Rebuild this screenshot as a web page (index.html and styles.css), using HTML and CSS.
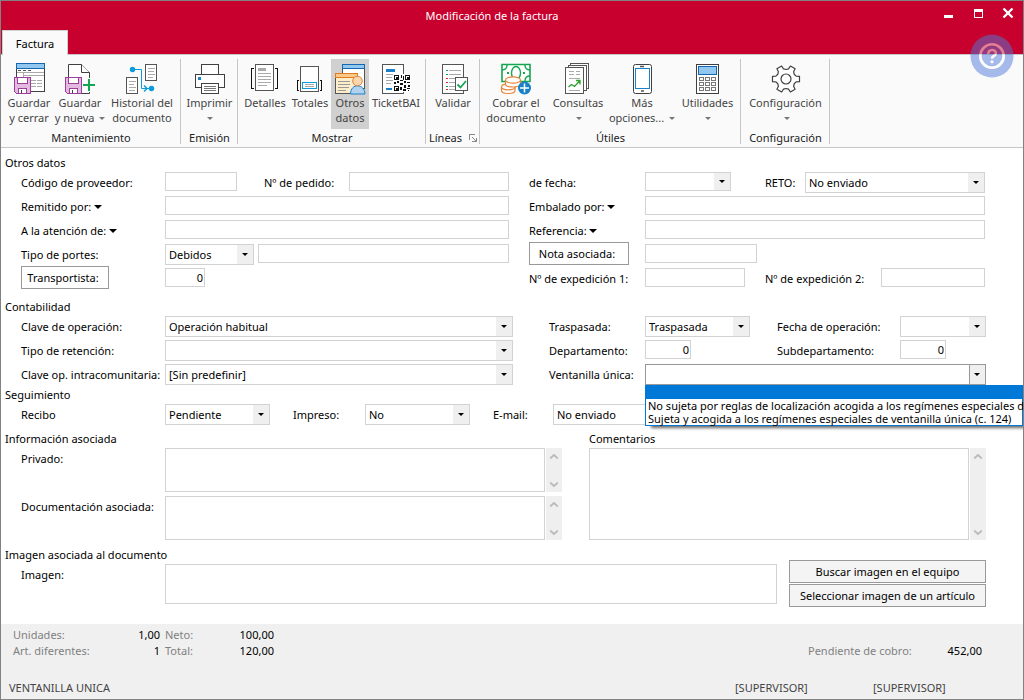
FILE: index.html
```html
<!DOCTYPE html>
<html lang="es">
<head>
<meta charset="utf-8">
<title>Modificación de la factura</title>
<link rel="stylesheet" href="styles.css">
</head>
<body>
<div class="window">
  <header class="titlebar">
    <div class="title-row">
      <h1 class="title">Modificación de la factura</h1>
      <div class="window-buttons">
        <button type="button" aria-label="Minimizar"><svg width="12" height="12" viewBox="0 0 12 12"><path d="M1.500 8h9v3h-9z" fill="#fff" shape-rendering="crispEdges"/></svg></button>
        <button type="button" aria-label="Maximizar"><svg width="12" height="12" viewBox="0 0 12 12" shape-rendering="crispEdges"><path d="M2 2h9v3H2zM2 2h1v9H2zM10 2h1v9h-1zM2 10h9v1H2z" fill="#fff"/></svg></button>
        <button type="button" aria-label="Cerrar"><svg width="12" height="12" viewBox="0 0 12 12"><path d="M1.500 1.500l9 9M10.500 1.500l-9 9" stroke="#fff" stroke-width="2.400"/></svg></button>
      </div>
    </div>
    <nav class="tabs"><button type="button" class="tab">Factura</button></nav>
    <button type="button" class="help" aria-label="Ayuda">
      <svg width="44" height="44" viewBox="0 0 44 44">
        <mask id="help-cut"><rect width="44" height="44" fill="#fff"/><circle cx="22" cy="22" r="11.700" fill="none" stroke="#000" stroke-width="2.600"/><path d="M18.300 20c0-5.300 7.600-5 7.600-.8 0 2.800-3.900 2.600-3.900 5.300" fill="none" stroke="#000" stroke-width="2.600"/><circle cx="22" cy="27.800" r="1.500" fill="#000"/></mask>
        <circle cx="22" cy="22" r="21.500" fill="#5078da" fill-opacity=".5" mask="url(#help-cut)"/>
        <g fill="none" stroke="#fff" stroke-opacity=".5" stroke-width="2.600"><circle cx="22" cy="22" r="11.700"/><path d="M18.300 20c0-5.300 7.600-5 7.600-.8 0 2.800-3.900 2.600-3.900 5.300"/></g>
        <circle cx="22" cy="27.800" r="1.500" fill="#fff" fill-opacity=".5"/>
      </svg>
    </button>
  </header>

  <div class="ribbon">
    <section class="group">
      <div class="tools">
        <button type="button" class="tool w50">
          <svg class="icon" viewBox="0 0 32 32" shape-rendering="crispEdges"><path d="M3.500 .5h28v28h-28z" fill="#fff" stroke="#404040"/><path d="M3.500 .5h28v5h-28z" fill="#92c8f0" stroke="#1467b0"/><path d="M5 7.500h3M10 7.500h3M15 7.500h3" stroke="#555"/><path d="M4 9.500h27M10.500 10v5M10 12.500h21" stroke="#aaa"/><path d="M18 17.500h11M18 20.500h11M18 23.500h11" stroke="#aaa" stroke-dasharray="5 1"/><path d="M1.500 14.500h16v16h-14l-2-2z" fill="#e3b9e0" stroke="#9b3f9b"/><path d="M4.500 14.500h10v6h-10zM5.500 25.500h8v5h-8z" fill="#fff" stroke="#9b3f9b"/><path d="M8 27v3" stroke="#404040"/></svg>
          <span>Guardar<br>y cerrar</span></button>
        <button type="button" class="tool w52">
          <svg class="icon" viewBox="0 0 32 32"><path d="M4.500 1.500h13l8 8v21h-21z" fill="#fff" stroke="#404040"/><path d="M17.500 1.500v8h8" fill="#fff" stroke="#404040"/><g shape-rendering="crispEdges"><path d="M1.500 14.500h16v16h-14l-2-2z" fill="#e3b9e0" stroke="#9b3f9b"/><path d="M4.500 14.500h10v6h-10zM5.500 25.500h8v5h-8z" fill="#fff" stroke="#9b3f9b"/><path d="M8 27v3" stroke="#404040"/><path d="M18 22h13M25 15v14" stroke="#fafafa" stroke-width="5"/><path d="M19 22h12M25 16v12" stroke="#14a651" stroke-width="2"/></g></svg>
          <span>Guardar<br>y nueva <i class="caret"></i></span></button>
        <button type="button" class="tool w72">
          <svg class="icon" viewBox="0 0 32 32"><g fill="#fff" stroke="#555" shape-rendering="crispEdges"><path d="M19.500 1.500h11v16h-11zM.5 14.500h11v16H.5z"/></g><path d="M21.500 5.500h7M21.500 8.500h6M21.500 11.500h7M21.500 14.500h5M2.500 18.500h7M2.500 21.500h5M2.500 24.500h7M2.500 27.500h6" stroke="#aaa" shape-rendering="crispEdges"/><path d="M6 6.500h9.500v19h10" fill="none" stroke="#0c9bdc"/><circle cx="6.500" cy="6.500" r="2.700" fill="#0c9bdc"/><circle cx="25.500" cy="25.500" r="2.700" fill="#0c9bdc"/><path d="M18 22.500l3 3-3 3" fill="none" stroke="#0c9bdc" stroke-width="1.500"/></svg>
          <span>Historial del<br>documento</span></button>
      </div>
      <h2 class="group-name">Mantenimiento</h2>
    </section>
    <section class="group">
      <div class="tools">
        <button type="button" class="tool w51">
          <svg class="icon" viewBox="0 0 32 32" shape-rendering="crispEdges"><g fill="#fff" stroke="#404040"><path d="M7.500 1.500h17v10h-17z"/><path d="M1.500 11.500h29v13h-29z"/><path d="M7.500 20.500h17v10h-17z"/></g><path d="M4 14h3v3H4z" fill="#1a80c9"/><path d="M10 23.500h12M10 25.500h12M10 27.500h12" stroke="#777"/></svg>
          <span>Imprimir<br><i class="caret"></i></span></button>
      </div>
      <h2 class="group-name">Emisión</h2>
    </section>
    <section class="group">
      <div class="tools">
        <button type="button" class="tool w48">
          <svg class="icon" viewBox="0 0 32 32" shape-rendering="crispEdges"><path d="M6.500 1.500h18v26h-18z" fill="#fff" stroke="#555"/><path d="M9 5h8v3H9z" fill="#aaa"/><path d="M9 10.500h13M9 13.500h13M9 16.500h13M9 19.500h13M9 22.500h9" stroke="#aaa"/><path d="M5 5.500H2.500v20H5M26 5.500h2.500v20H26" fill="none" stroke="#111"/></svg>
          <span>Detalles</span></button>
        <button type="button" class="tool w42">
          <svg class="icon" viewBox="0 0 32 32" shape-rendering="crispEdges"><path d="M6.500 3.500h18v25h-18z" fill="#fff" stroke="#555"/><path d="M8.500 19.500h14v6h-14z" fill="#fff" stroke="#0c9bdc"/><path d="M11 21.500h9M11 23.500h9" stroke="#aaa"/><path d="M5 17.500H3.500v10H5M26 17.500h1.500v10H26" fill="none" stroke="#111"/></svg>
          <span>Totales</span></button>
        <button type="button" class="tool w38 active" aria-pressed="true">
          <svg class="icon" viewBox="0 0 32 32"><g shape-rendering="crispEdges"><path d="M8.500 1.500h22v24h-22z" fill="#fff" stroke="#555"/><path d="M8.500 1.500h22v4h-22z" fill="#92c8f0" stroke="#1467b0"/><path d="M1.500 10.500h22v20h-22z" fill="#fdeec9" stroke="#555"/><path d="M1.500 10.500h22v4h-22z" fill="#fbc987" stroke="#e07a20"/><path d="M4 18.500h12M4 21.500h12M4 24.500h11M4 27.500h8" stroke="#999"/></g><path d="M16.500 31c0-11 14-11 14.500 0z" fill="#b0d2ee" stroke="#1a80c9"/><circle cx="23.500" cy="18" r="4.800" fill="#fbd5ac" stroke="#d8863e"/></svg>
          <span>Otros<br>datos</span></button>
        <button type="button" class="tool w54">
          <svg class="icon" viewBox="0 0 32 32" shape-rendering="crispEdges"><path d="M2.500 1.500h21v29h-21z" fill="#fff" stroke="#555"/><path d="M6 6h9v3H6zM6 25h6v2H6z" fill="#1a80c9"/><path d="M6 11.500h7M6 14.500h6M6 17.500h7M6 20.500h5" stroke="#aaa"/><path d="M13 11h18v18H13z" fill="#fff"/><path d="M14.500 12.500h4v4h-4zM25.500 12.500h4v4h-4zM14.500 23.500h4v4h-4z" fill="none" stroke="#111"/><path d="M16 14h2v2h-2zM27 14h2v2h-2zM16 25h2v2h-2zM21 12h1v3h-1zM23 13h1v4h-1zM20 17h3v1h-3zM14 19h2v2h-2zM17 18h2v2h-2zM20 20h3v2h-3zM24 18h2v2h-2zM27 19h3v1h-3zM24 22h2v3h-2zM28 22h2v2h-2zM20 24h2v3h-2zM23 26h3v2h-3zM27 25h3v1h-3zM28 27h1v1h-1z" fill="#111"/></svg>
          <span>TicketBAI</span></button>
      </div>
      <h2 class="group-name">Mostrar</h2>
    </section>
    <section class="group">
      <div class="tools">
        <button type="button" class="tool w48">
          <svg class="icon" viewBox="0 0 32 32"><g shape-rendering="crispEdges"><path d="M5.500 1.500h21v29h-21z" fill="#fff" stroke="#555"/><path d="M12 7.500h12M12 11.500h12M12 15.500h8M12 19.500h7M12 23.500h6M12 26.500h6" stroke="#aaa"/><path d="M9 7.500h2M9 11.500h2M9 23.500h2" stroke="#14a651"/><path d="M9 15.500h2M9 19.500h2M9 26.500h2" stroke="#d22"/><path d="M18.500 14.500h12v13h-12z" fill="#fff" stroke="#555"/></g><path d="M20.500 21.500l3 3 5.500-6.500" fill="none" stroke="#14a651" stroke-width="1.800"/></svg>
          <span>Validar</span></button>
      </div>
      <h2 class="group-name spread">Líneas <svg width="9" height="9" viewBox="0 0 9 9" fill="none" stroke="#888" shape-rendering="crispEdges"><path d="M1.500 7V1.500H7M4 4l4 4M8 5v3.500H4"/></svg></h2>
    </section>
    <section class="group">
      <div class="tools">
        <button type="button" class="tool w66">
          <svg class="icon" viewBox="0 0 32 32"><path d="M2 1.500h28v17H2z" fill="#fff" stroke="#14a651" stroke-width="1.600"/><path d="M2 7c4 0 5-2 5-5M30 7c-4 0-5-2-5-5M30 13c-4 0-5 2-5 5" fill="none" stroke="#14a651" stroke-width="1.400"/><ellipse cx="16" cy="10" rx="4.500" ry="6.500" fill="#fff" stroke="#14a651" stroke-width="1.400"/><path d="M7 9h2v2H7zM23 9h2v2h-2z" fill="#14a651"/><g fill="#fff" stroke="#e8853a" stroke-width="1.200"><path d="M1.500 24v3.500c0 4 13.500 4 13.500 0V24"/><ellipse cx="8.200" cy="24" rx="6.700" ry="2.800"/><path d="M5.500 17v4c0 4 15 4 15 0v-4"/><ellipse cx="13" cy="17" rx="7.500" ry="3.200"/></g><circle cx="24.500" cy="25" r="6.500" fill="#1a80c9"/><path d="M20 25h9M24.500 20.500v9" stroke="#fff" stroke-width="1.500"/></svg>
          <span>Cobrar el<br>documento</span></button>
        <button type="button" class="tool w58">
          <svg class="icon" viewBox="0 0 32 32"><g shape-rendering="crispEdges" fill="#fff" stroke="#555"><path d="M8.500 .5h18v25h-18z"/><path d="M6.500 2.500h18v25h-18z"/><path d="M3.500 4.500h18v26h-18z"/><path d="M7 8.500h5M14 8.500h4M7 11.500h5M14 11.500h4M7 15.500h11M7 27.500h11" stroke="#aaa"/></g><path d="M6.500 24l3-2.500 3 2 5.500-6M14 17.500h4v4" fill="none" stroke="#2ba02b" stroke-width="1.300"/></svg>
          <span>Consultas<br><i class="caret"></i></span></button>
        <button type="button" class="tool w70">
          <svg class="icon" viewBox="0 0 32 32"><rect x="7.500" y="1.500" width="18" height="29" rx="2" fill="#fff" stroke="#404040"/><path d="M9.500 5.500h14v20h-14z" fill="#fff" stroke="#1a80c9" shape-rendering="crispEdges"/><path d="M14 3.500h4M15 28h3" stroke="#555" stroke-width="1.300"/></svg>
          <span>Más<br>opciones... <i class="caret"></i></span></button>
        <button type="button" class="tool w61">
          <svg class="icon" viewBox="0 0 32 32" shape-rendering="crispEdges"><path d="M4.500 1.500h22v29h-22z" fill="#fff" stroke="#404040"/><path d="M6.500 3.500h18v8h-18z" fill="#92c8f0" stroke="#1467b0"/><path d="M7.500 14.500h4v3h-4zM13.500 14.500h4v3h-4zM19.500 14.500h4v3h-4zM7.500 19.500h4v3h-4zM13.500 19.500h4v3h-4zM19.500 19.500h4v3h-4zM7.500 24.500h4v3h-4zM13.500 24.500h4v3h-4zM19.500 24.500h4v3h-4z" fill="#fff" stroke="#777"/></svg>
          <span>Utilidades<br><i class="caret"></i></span></button>
      </div>
      <h2 class="group-name">Útiles</h2>
    </section>
    <section class="group">
      <div class="tools">
        <button type="button" class="tool w83">
          <svg class="icon" viewBox="0 0 32 32" fill="#fff" stroke="#404040" stroke-width="1.200"><path stroke-linejoin="round" d="M26.100 13.100L29.500 13.300V18.700L26.100 18.900L24.200 20.750L23.600 23.300L25.100 26.300L20.400 29L18.500 26.200L16 25.500L13.500 26.200L11.600 29L6.900 26.300L8.400 23.300L7.800 20.750L5.900 18.900L2.500 18.700V13.300L5.900 13.100L7.800 11.250L8.400 8.700L6.900 5.700L11.600 3L13.500 5.800L16 6.500L18.500 5.800L20.400 3L25.100 5.700L23.600 8.700L24.200 11.250z"/><circle cx="16" cy="16" r="5"/></svg>
          <span>Configuración<br><i class="caret"></i></span></button>
      </div>
      <h2 class="group-name">Configuración</h2>
    </section>
  </div>

  <main class="form">
    <section class="section">
      <h2>Otros datos</h2>
      <div class="grid general">
        <label for="codigo">Código de proveedor:</label>
        <div class="row"><input id="codigo" class="w72"><label for="pedido" class="lead mid">Nº de pedido:</label><input id="pedido" class="grow"></div>
        <label for="fecha" class="col2">de fecha:</label>
        <div class="row"><select id="fecha" class="w86 date-box"><option></option></select><label for="reto" class="lead reto">RETO:</label><select id="reto" class="grow"><option>No enviado</option></select></div>

        <label for="remitido">Remitido por: <i class="caret dark"></i></label>
        <input id="remitido">
        <label for="embalado" class="col2">Embalado por: <i class="caret dark"></i></label>
        <input id="embalado">

        <label for="atencion">A la atención de: <i class="caret dark"></i></label>
        <input id="atencion">
        <label for="referencia" class="col2">Referencia: <i class="caret dark"></i></label>
        <input id="referencia">

        <label for="portes">Tipo de portes:</label>
        <div class="row gap4"><select id="portes" class="w89"><option>Debidos</option></select><input class="grow" aria-label="Detalle de portes"></div>
        <button type="button" class="btn plain w100 col2">Nota asociada:</button>
        <div class="row"><input class="w112" aria-label="Nota asociada"></div>

        <button type="button" class="btn plain w88">Transportista:</button>
        <div class="row"><input class="w40 num" value="0" aria-label="Transportista"></div>
        <label for="exp1" class="col2">Nº de expedición 1:</label>
        <div class="row"><input id="exp1" class="w100"><label for="exp2" class="lead grow exp">Nº de expedición 2:</label><input id="exp2" class="w104"></div>
      </div>
    </section>

    <section class="section gap-l">
      <h2>Contabilidad</h2>
      <div class="grid accounting">
        <label for="clave">Clave de operación:</label>
        <select id="clave"><option>Operación habitual</option></select>
        <label for="traspasada" class="col2">Traspasada:</label>
        <div class="row"><select id="traspasada" class="w105"><option>Traspasada</option></select><label for="fop" class="grow lead date">Fecha de operación:</label><select id="fop" class="w86"><option></option></select></div>

        <label for="retencion">Tipo de retención:</label>
        <select id="retencion"><option></option></select>
        <label for="depto" class="col2">Departamento:</label>
        <div class="row"><div class="w105 row"><input id="depto" class="w46 num" value="0"></div><label for="subdepto" class="grow lead date">Subdepartamento:</label><div class="w86 row"><input id="subdepto" class="w46 num" value="0"></div></div>

        <label for="intra">Clave op. intracomunitaria:</label>
        <select id="intra"><option>[Sin predefinir]</option></select>
        <label for="ventanilla" class="col2">Ventanilla única:</label>
        <div class="open-combo">
          <select id="ventanilla"><option></option></select>
          <ul class="list" role="listbox" aria-label="Ventanilla única">
            <li role="option" class="selected" aria-selected="true"></li>
            <li role="option">No sujeta por reglas de localización acogida a los regímenes especiales d</li>
            <li role="option">Sujeta y acogida a los regímenes especiales de ventanilla única (c. 124)</li>
          </ul>
        </div>
      </div>
    </section>

    <section class="section gap-s">
      <h2>Seguimiento</h2>
      <div class="row tracking">
        <label for="recibo" class="w144">Recibo</label><select id="recibo" class="w105"><option>Pendiente</option></select>
        <label for="impreso" class="lead w95">Impreso:</label><select id="impreso" class="w105"><option>No</option></select>
        <label for="email" class="lead w83">E-mail:</label><select id="email" class="w200"><option>No enviado</option></select>
      </div>
    </section>

    <div class="info">
      <section class="section">
        <h2>Información asociada</h2>
        <div class="memo-row"><label for="privado">Privado:</label><div class="memo"><textarea id="privado"></textarea><span class="scroll"><svg viewBox="0 0 8 5"><path d="M0 4.500l4-3.500 4 3.500"/></svg><svg viewBox="0 0 8 5"><path d="M0 .5l4 3.500 4-3.500"/></svg></span></div></div>
        <div class="memo-row"><label for="docu">Documentación asociada:</label><div class="memo"><textarea id="docu"></textarea><span class="scroll"><svg viewBox="0 0 8 5"><path d="M0 4.500l4-3.500 4 3.500"/></svg><svg viewBox="0 0 8 5"><path d="M0 .5l4 3.500 4-3.500"/></svg></span></div></div>
      </section>
      <section class="section comments">
        <h2><label for="coment">Comentarios</label></h2>
        <div class="memo"><textarea id="coment"></textarea><span class="scroll"><svg viewBox="0 0 8 5"><path d="M0 4.500l4-3.500 4 3.500"/></svg><svg viewBox="0 0 8 5"><path d="M0 .5l4 3.500 4-3.500"/></svg></span></div>
      </section>
    </div>

    <div class="image-block">
      <section class="section">
        <h2>Imagen asociada al documento</h2>
        <div class="memo-row short"><label for="imagen">Imagen:</label><textarea id="imagen"></textarea></div>
      </section>
      <div class="image-buttons">
        <button type="button" class="btn">Buscar imagen en el equipo</button>
        <button type="button" class="btn">Seleccionar imagen de un artículo</button>
      </div>
    </div>
  </main>

  <footer class="footer">
    <div class="totals">
      <dl><dt>Unidades:</dt><dd>1,00</dd><dt>Art. diferentes:</dt><dd>1</dd></dl>
      <dl class="amounts"><dt>Neto:</dt><dd>100,00</dd><dt>Total:</dt><dd>120,00</dd></dl>
      <dl class="pending"><dt>Pendiente de cobro:</dt><dd>452,00</dd></dl>
    </div>
    <div class="status"><span class="grow">VENTANILLA UNICA</span><span class="user">[SUPERVISOR]</span><span class="user">[SUPERVISOR]</span></div>
  </footer>
</div>
</body>
</html>
```
FILE: styles.css
```css
* { box-sizing: border-box; }
body, h1, h2, ul, dl, dd { margin: 0; padding: 0; }
body, button, input, select, textarea {
  font: 11px/15px "Noto Sans", "Open Sans", sans-serif;
  color: #000;
}
button { padding: 0; border: 0; background: none; }
h1, h2 { font-size: 11px; font-weight: 400; }

.window {
  display: flex;
  flex-direction: column;
  min-height: 100vh;
  border: 1px solid #828282;
  background: #fff;
  overflow: hidden;
}

/* Title bar */
.titlebar { position: relative; background: #c8002d; }
.title-row { display: flex; height: 29px; }
.title { flex: 1; padding-left: 50px; line-height: 30px; text-align: center; color: #fff; }
.window-buttons { display: flex; padding-top: 6px; }
.window-buttons button { width: 30px; height: 12px; }
.window-buttons svg { display: block; margin: 0 auto; }
.tabs { display: flex; padding-left: 1px; border-bottom: 1px solid #c6c6c6; }
.tab {
  width: 66px;
  height: 25px;
  margin-bottom: -1px;
  border: 1px solid #d0d0d0;
  border-bottom: 0;
  background: #fafafa;
}
.help { position: absolute; right: 9px; bottom: -23px; z-index: 2; height: 44px; }
.help svg { display: block; }

/* Ribbon */
.ribbon {
  display: flex;
  padding: 4px 0 3px;
  background: #fafafa;
  border-bottom: 1px solid #c6c6c6;
}
.group { padding: 0 2px 0 3px; border-right: 1px solid #c6c6c6; }
.tools { display: flex; height: 72px; }
.tool {
  display: flex;
  flex-direction: column;
  align-items: center;
  height: 70px;
  padding-top: 4px;
  color: #444;
  white-space: nowrap;
}
.tool.active { background: #d0d0d0; }
.icon { width: 32px; height: 32px; }
.group-name { line-height: 13px; text-align: center; color: #222; }
.group-name.spread { display: flex; justify-content: space-between; align-items: center; }
.caret {
  display: inline-block;
  margin-left: 2px;
  border: 3px solid transparent;
  border-top-color: #777;
  border-bottom: 0;
  vertical-align: 2px;
}
.caret.dark { border-width: 4px 4px 0; margin-left: 0; border-top-color: #000; }

/* Form */
.form { flex: 1; padding: 7px 37px 14px 4px; }
.section h2 { line-height: 15px; }
.gap-l { margin-top: 9px; }
.gap-s { margin-top: 1px; }
.grid { display: grid; grid-auto-rows: 24px; align-items: start; padding-left: 16px; }
.general { grid-template-columns: 144px minmax(0, 344fr) 136px minmax(0, 340fr); padding-right: 1px; }
.accounting { grid-template-columns: 144px minmax(0, 348fr) 132px minmax(0, 341fr); }
.general .col2 { margin-left: 20px; }
.accounting .col2 { margin-left: 36px; }
.row { display: flex; align-items: flex-start; }
.gap4 { gap: 4px; }
.grow { flex: 1; min-width: 0; }
.form label { padding-top: 2px; line-height: 22px; white-space: nowrap; }
.form h2 label { padding: 0; line-height: 15px; }
.form .lead { padding-left: 23px; }
.form .lead.mid { width: 112px; padding-left: 27px; }
.form .lead.reto { width: 74px; padding-left: 34px; }
.form .lead.exp { padding-left: 20px; }
.form .lead.date { padding-left: 27px; }
.tracking { padding-left: 16px; }

input, select, textarea { border: 1px solid #d2d2d2; border-radius: 0; background: #fff; outline: 0; }
input { height: 19px; margin: 2px 0 3px; padding: 0 3px; }
select {
  height: 21px;
  margin: 2px 0 1px;
  padding: 0 18px 0 3px;
  appearance: none;
  background:
    url("data:image/svg+xml,%3Csvg xmlns='http://www.w3.org/2000/svg' width='6' height='3'%3E%3Cpath d='M0 0h6L3 3z'/%3E%3C/svg%3E") no-repeat right 5px center,
    linear-gradient(#efefef, #efefef) no-repeat right / 16px 100%,
    #fff;
}
.form .date-box { height: 19px; }
.grid > input, .grid > select { width: 100%; }
.num { padding-right: 1px; text-align: right; }

.btn { height: 23px; border: 1px solid #999; background: #f4f4f4; }
.btn.plain { background: #fff; padding-right: 4px; }

.open-combo { position: relative; }
.open-combo select {
  width: 100%;
  border-color: #999;
  background:
    url("data:image/svg+xml,%3Csvg xmlns='http://www.w3.org/2000/svg' width='6' height='3'%3E%3Cpath d='M0 0h6L3 3z'/%3E%3C/svg%3E") no-repeat right 5px center,
    linear-gradient(#efefef, #efefef) no-repeat right / 15px 100%,
    linear-gradient(#999, #999) no-repeat right / 16px 100%,
    #fff;
}
.list {
  position: absolute;
  top: 23px;
  left: 0;
  right: -37px;
  z-index: 1;
  border: 1px solid #0078d7;
  background: #fff;
  box-shadow: 4px 4px 3px -2px rgba(0, 0, 0, .6);
  list-style: none;
}
.list li { height: 13px; padding-left: 2px; line-height: 13px; white-space: nowrap; }
.list .selected { background: #0078d7; }

.info { display: grid; grid-template-columns: minmax(0, 557fr) minmax(0, 397fr); gap: 27px; margin-top: 5px; }
.memo-row { display: grid; grid-template-columns: 144px minmax(0, 1fr); height: 48px; padding-left: 16px; }
.memo { display: flex; gap: 1px; height: 44px; margin-top: 2px; }
.memo textarea { flex: 1; min-width: 0; }
.comments .memo { height: 92px; }
textarea { resize: none; overflow: hidden; }
.scroll {
  display: flex;
  flex-direction: column;
  justify-content: space-between;
  align-items: center;
  width: 16px;
  padding: 6px 0 5px;
  background: #efefef;
}
.scroll svg { width: 8px; height: 5px; fill: none; stroke: #bbb; stroke-width: 2; }

.image-block { display: grid; grid-template-columns: minmax(0, 1fr) 197px; gap: 12px; align-items: end; margin-top: 5px; }
.short { height: 45px; }
.short textarea { height: 40px; margin-top: 2px; }
.image-buttons { display: flex; flex-direction: column; gap: 1px; }

/* Footer */
.footer { background: #f0f0f0; }
.totals { display: flex; padding: 3px 41px 0 12px; }
dl { display: grid; grid-template-columns: auto auto; width: 147px; line-height: 16px; align-content: start; }
dt { color: #808080; }
dd { text-align: right; }
.amounts { width: 109px; margin-left: 5px; }
.pending { width: 174px; margin: 16px 0 0 auto; }
.status { display: flex; padding: 21px 12px 3px 8px; line-height: 16px; color: #444; }
.user { width: 138px; }

.w38 { width: 38px; }
.w40 { width: 40px; }
.w42 { width: 42px; }
.w46 { width: 46px; }
.w48 { width: 48px; }
.w50 { width: 50px; }
.w51 { width: 51px; }
.w52 { width: 52px; }
.w54 { width: 54px; }
.w58 { width: 58px; }
.w61 { width: 61px; }
.w66 { width: 66px; }
.w70 { width: 70px; }
.w72 { width: 72px; }
.w83 { width: 83px; }
.w86 { width: 86px; }
.w88 { width: 88px; }
.w89 { width: 89px; }
.w95 { width: 95px; }
.w100 { width: 100px; }
.w104 { width: 104px; }
.w105 { width: 105px; }
.w112 { width: 112px; }
.w144 { width: 144px; }
.w200 { width: 200px; }
```
